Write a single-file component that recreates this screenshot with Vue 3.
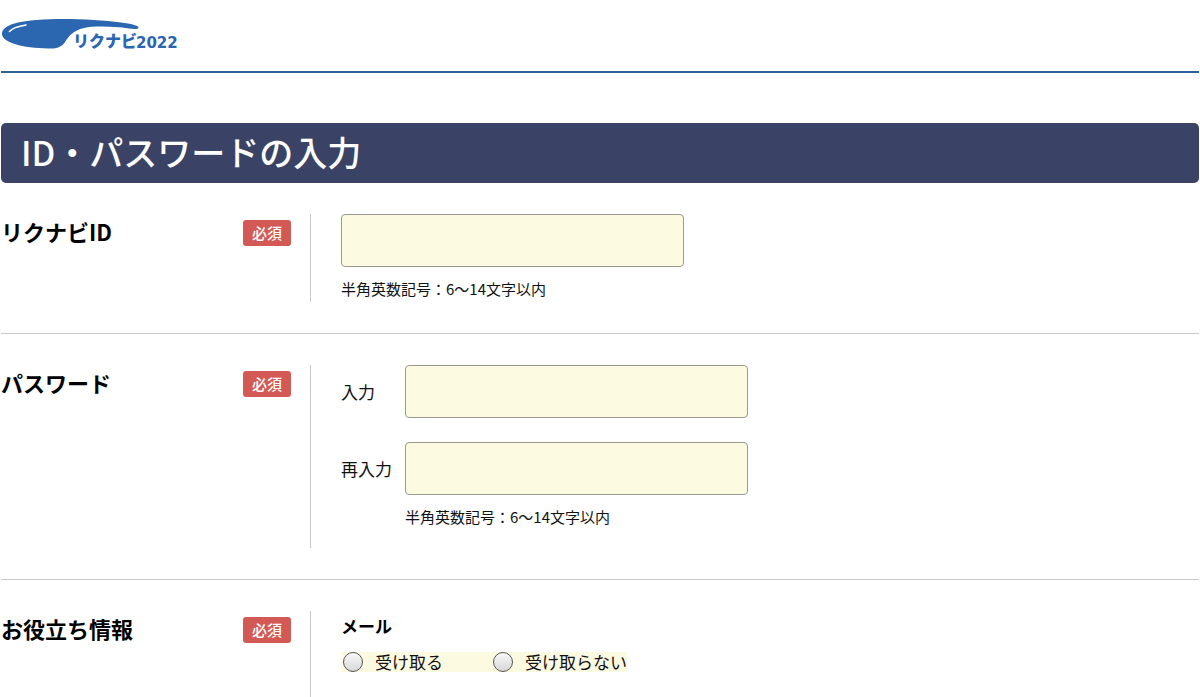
<script setup>
import { ref } from 'vue'

const userId = ref('')
const password = ref('')
const passwordConfirm = ref('')
const mail = ref('')

const mailOptions = [
  { value: 'yes', label: '受け取る' },
  { value: 'no', label: '受け取らない' }
]
</script>

<template>
  <div class="page">
    <header class="header">
      <svg class="logo" width="180" height="40" viewBox="0 0 180 40" role="img" aria-label="リクナビ2022">
        <path
          fill="#2b66b1"
          d="M1 18C1 10 14 5.500 36 4C62 2 96 3.500 120 6.500C130 7.800 137.500 9.500 137.500 11.500C137.500 13.200 133 13.300 128 12.500C112 10.200 93 9.800 83 12C72 14.500 68 20 64 26C61 31 55 33 47 32.500C22 32 1 26.500 1 18Z"
        />
        <path
          fill="none"
          stroke="#fff"
          stroke-width="1.600"
          stroke-linecap="round"
          d="M8.500 15.500C11 12.500 16 10.500 25 9"
        />
        <text class="logo-kana" x="72" y="31">リクナビ</text>
        <text class="logo-year" x="135" y="32">2022</text>
      </svg>
    </header>

    <main>
      <h1 class="title">ID・パスワードの入力</h1>

      <form @submit.prevent>
        <div class="row">
          <div class="head">
            <label class="name" for="user-id">リクナビID</label>
            <span class="required">必須</span>
          </div>
          <div class="body">
            <input id="user-id" v-model="userId" class="text" type="text" />
            <p class="note">半角英数記号：6〜14文字以内</p>
          </div>
        </div>

        <div class="row">
          <div class="head">
            <span class="name">パスワード</span>
            <span class="required">必須</span>
          </div>
          <div class="body passwords">
            <div class="field">
              <label for="password">入力</label>
              <input id="password" v-model="password" class="text" type="password" />
            </div>
            <div class="field">
              <label for="password-confirm">再入力</label>
              <input id="password-confirm" v-model="passwordConfirm" class="text" type="password" />
            </div>
            <p class="note">半角英数記号：6〜14文字以内</p>
          </div>
        </div>

        <div class="row">
          <div class="head">
            <span class="name">お役立ち情報</span>
            <span class="required">必須</span>
          </div>
          <div class="body info">
            <h2 id="mail-title" class="subtitle">メール</h2>
            <div class="options" role="radiogroup" aria-labelledby="mail-title">
              <label v-for="option in mailOptions" :key="option.value" class="option">
                <input v-model="mail" type="radio" name="mail" :value="option.value" />
                {{ option.label }}
              </label>
            </div>
          </div>
        </div>
      </form>
    </main>
  </div>
</template>

<style>
body {
  margin: 0;
  background: #fff;
}
</style>

<style scoped>
.page {
  padding: 0 1px;
  color: #111;
  font-family: 'Noto Sans CJK JP', sans-serif;
  font-size: 17px;
}

.header {
  padding: 16px 0 15px;
  border-bottom: 2px solid #2e629a;
}

.logo {
  display: block;
}

.logo-kana {
  fill: #2b66b1;
  font-size: 16px;
  font-weight: 900;
}

.logo-year {
  fill: #2b66b1;
  font-family: 'DejaVu Sans', sans-serif;
  font-size: 15px;
  font-weight: 700;
}

.title {
  margin: 50px 0 0;
  padding: 0 20px 2px;
  border-radius: 5px;
  background: #3a4366;
  color: #fff;
  font-size: 34px;
  font-weight: 500;
  line-height: 58px;
}

.row {
  display: flex;
  padding: 31px 0;
  border-bottom: 1px solid #c8c8c8;
}

.row:last-child {
  padding-bottom: 0;
  border-bottom: none;
}

.head {
  display: flex;
  flex: none;
  align-items: flex-start;
  justify-content: space-between;
  box-sizing: border-box;
  width: 309px;
  padding-right: 19px;
}

.name {
  color: #000;
  font-size: 22px;
  font-weight: 700;
  line-height: 34px;
}

.required {
  margin-top: 6px;
  padding: 0 9px;
  border-radius: 3px;
  background: #d35a54;
  color: #fff;
  font-size: 15px;
  font-weight: 500;
  line-height: 26px;
}

.body {
  flex: 1;
  padding-left: 30px;
  border-left: 1px solid #c8c8c8;
}

.text {
  display: block;
  box-sizing: border-box;
  width: 343px;
  height: 53px;
  padding: 0 12px;
  border: 1px solid #99998f;
  border-radius: 4px;
  background: #fdfae2;
  font: inherit;
}

.note {
  margin: 10px 0 0;
  padding-bottom: 1px;
  font-size: 15px;
  line-height: 24px;
}

.passwords {
  padding-bottom: 18px;
}

.field {
  display: flex;
  align-items: center;
}

.field + .field {
  margin-top: 24px;
}

.field label {
  width: 64px;
}

.passwords .note {
  margin-left: 64px;
}

.info {
  padding-bottom: 25px;
}

.subtitle {
  margin: 0 0 11px;
  color: #000;
  font-size: 17px;
  font-weight: 700;
  line-height: 30px;
}

.options {
  display: flex;
  width: fit-content;
  gap: 48px;
  background: #fdfae2;
  line-height: 20px;
}

.option {
  display: flex;
  align-items: center;
  height: 20px;
}

.option input {
  appearance: none;
  flex: none;
  box-sizing: border-box;
  width: 20px;
  height: 20px;
  margin: 0 12px 0 2px;
  border: 1px solid #555;
  border-radius: 50%;
  background: linear-gradient(#f8f8f8, #d8d8d8);
}

.option input:checked {
  background: radial-gradient(#333 35%, #e8e8e8 40%);
}
</style>
